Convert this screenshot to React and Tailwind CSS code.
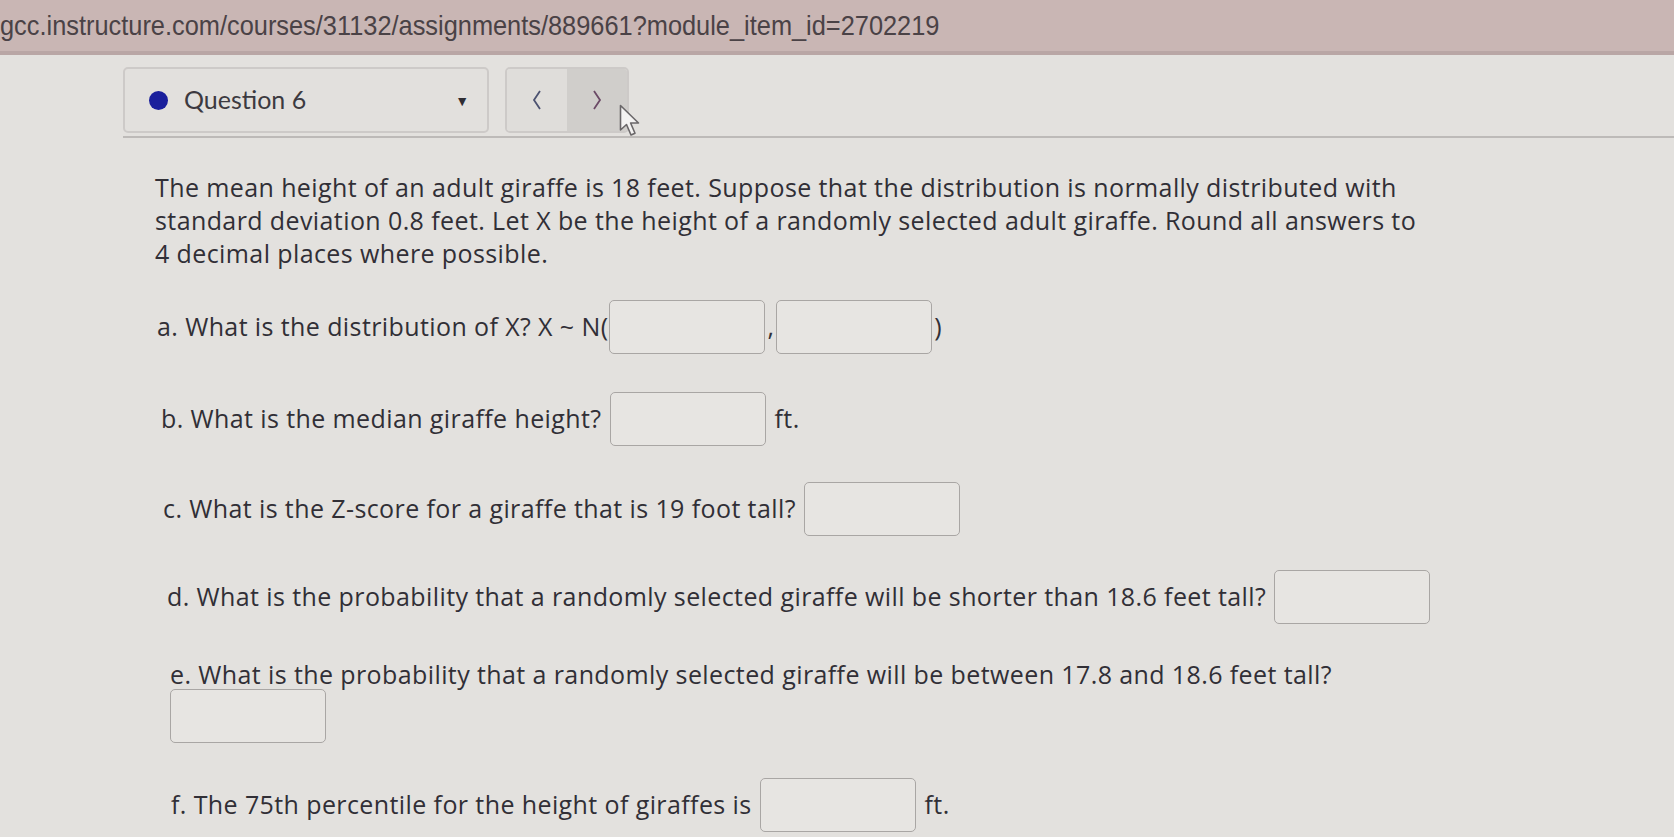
import React from 'react';

const Box = ({ className = '' }) => (
  <span
    className={`inline-block w-[156px] h-[54px] rounded-[5px] border border-[#a9a6a4] bg-[#e7e5e2] align-middle ${className}`}
  ></span>
);

const Cursor = () => (
  <svg className="absolute left-[619px] top-[104px]" width="22" height="34" viewBox="0 0 22 34">
    <path
      d="M1.5 1.5 L1.5 26 L7.5 20.5 L12 31 L16 29.2 L11.6 19 L19.5 19 Z"
      fill="#f4f3f2"
      stroke="#6a6769"
      strokeWidth="1.6"
      strokeLinejoin="round"
    />
  </svg>
);

const App = () => {
  return (
    <div className="relative w-[1674px] h-[837px] overflow-hidden bg-[#e3e1de] text-[#312f36]" style={{ fontFamily: '"Open Sans", Lato, sans-serif' }}>
      {/* address bar */}
      <div className="h-[55px] bg-[#c9b6b4] border-b-[4px] border-[#b9a6a5] overflow-hidden">
        <div
          className="text-[28px] leading-[52px] text-[#4a4246] whitespace-nowrap origin-left scale-x-[0.906]"
          style={{ fontFamily: '"Liberation Sans", Arial, sans-serif' }}
        >
          gcc.instructure.com/courses/31132/assignments/889661?module_item_id=2702219
        </div>
      </div>

      <div className="pl-[123px]">
        {/* question nav */}
        <div className="flex gap-[16px] pt-[12px] pb-[3px] border-b-[2px] border-[#bdbab8]">
          <div className="w-[366px] h-[66px] rounded-[5px] border-[2px] border-[#cdcac8] bg-[#e2e0dd] flex items-center px-[24px]">
            <span className="w-[19px] h-[19px] rounded-full bg-[#1a1f9c]"></span>
            <span className="ml-[16px] text-[25px] text-[#3c3a40]" style={{ fontFamily: 'Lato, sans-serif' }}>Question 6</span>
            <span className="ml-auto -mr-[6px] text-[14px] text-[#2f2d33]">▼</span>
          </div>
          <div className="w-[124px] h-[66px] rounded-[5px] border-[2px] border-[#cdcac8] flex overflow-hidden">
            <div className="w-[60px] bg-[#dfddda] flex items-center justify-center">
              <svg width="14" height="24" viewBox="0 0 14 24">
                <path d="M10 3 L4 12 L10 21" fill="none" stroke="#4c5270" strokeWidth="1.8" />
              </svg>
            </div>
            <div className="flex-1 bg-[#d0cecb] flex items-center justify-center">
              <svg width="14" height="24" viewBox="0 0 14 24">
                <path d="M4 3 L10 12 L4 21" fill="none" stroke="#6b4a66" strokeWidth="1.8" />
              </svg>
            </div>
          </div>
        </div>

        {/* question body */}
        <div className="pl-[32px] pt-[33px] text-[25px] tracking-[0.4px]">
          <p className="leading-[33px] w-[1270px]">
            The mean height of an adult giraffe is 18 feet. Suppose that the distribution is normally distributed with standard deviation 0.8 feet. Let X be the height of a randomly selected adult giraffe. Round all answers to 4 decimal places where possible.
          </p>

          <div className="mt-[30px] flex items-center ml-[2px]">
            <span>a. What is the distribution of X? X ~ N(</span>
            <Box className="ml-[1px]" />
            <span className="mx-[2px]">,</span>
            <Box />
            <span className="ml-[2px]">)</span>
          </div>

          <div className="mt-[38px] flex items-center ml-[6px]">
            <span>b. What is the median giraffe height?</span>
            <Box className="ml-[8px]" />
            <span className="ml-[9px]">ft.</span>
          </div>

          <div className="mt-[36px] flex items-center ml-[8px]">
            <span>c. What is the Z-score for a giraffe that is 19 foot tall?</span>
            <Box className="ml-[8px]" />
          </div>

          <div className="mt-[34px] flex items-center ml-[12px]">
            <span>d. What is the probability that a randomly selected giraffe will be shorter than 18.6 feet tall?</span>
            <Box className="ml-[8px]" />
          </div>

          <div className="mt-[35px] ml-[15px]">
            <div className="leading-[30px]">e. What is the probability that a randomly selected giraffe will be between 17.8 and 18.6 feet tall?</div>
            <Box />
          </div>

          <div className="mt-[35px] flex items-center ml-[16px]">
            <span>f. The 75th percentile for the height of giraffes is</span>
            <Box className="ml-[8px]" />
            <span className="ml-[9px]">ft.</span>
          </div>
        </div>
      </div>

      <Cursor />
    </div>
  );
};

export default App;
